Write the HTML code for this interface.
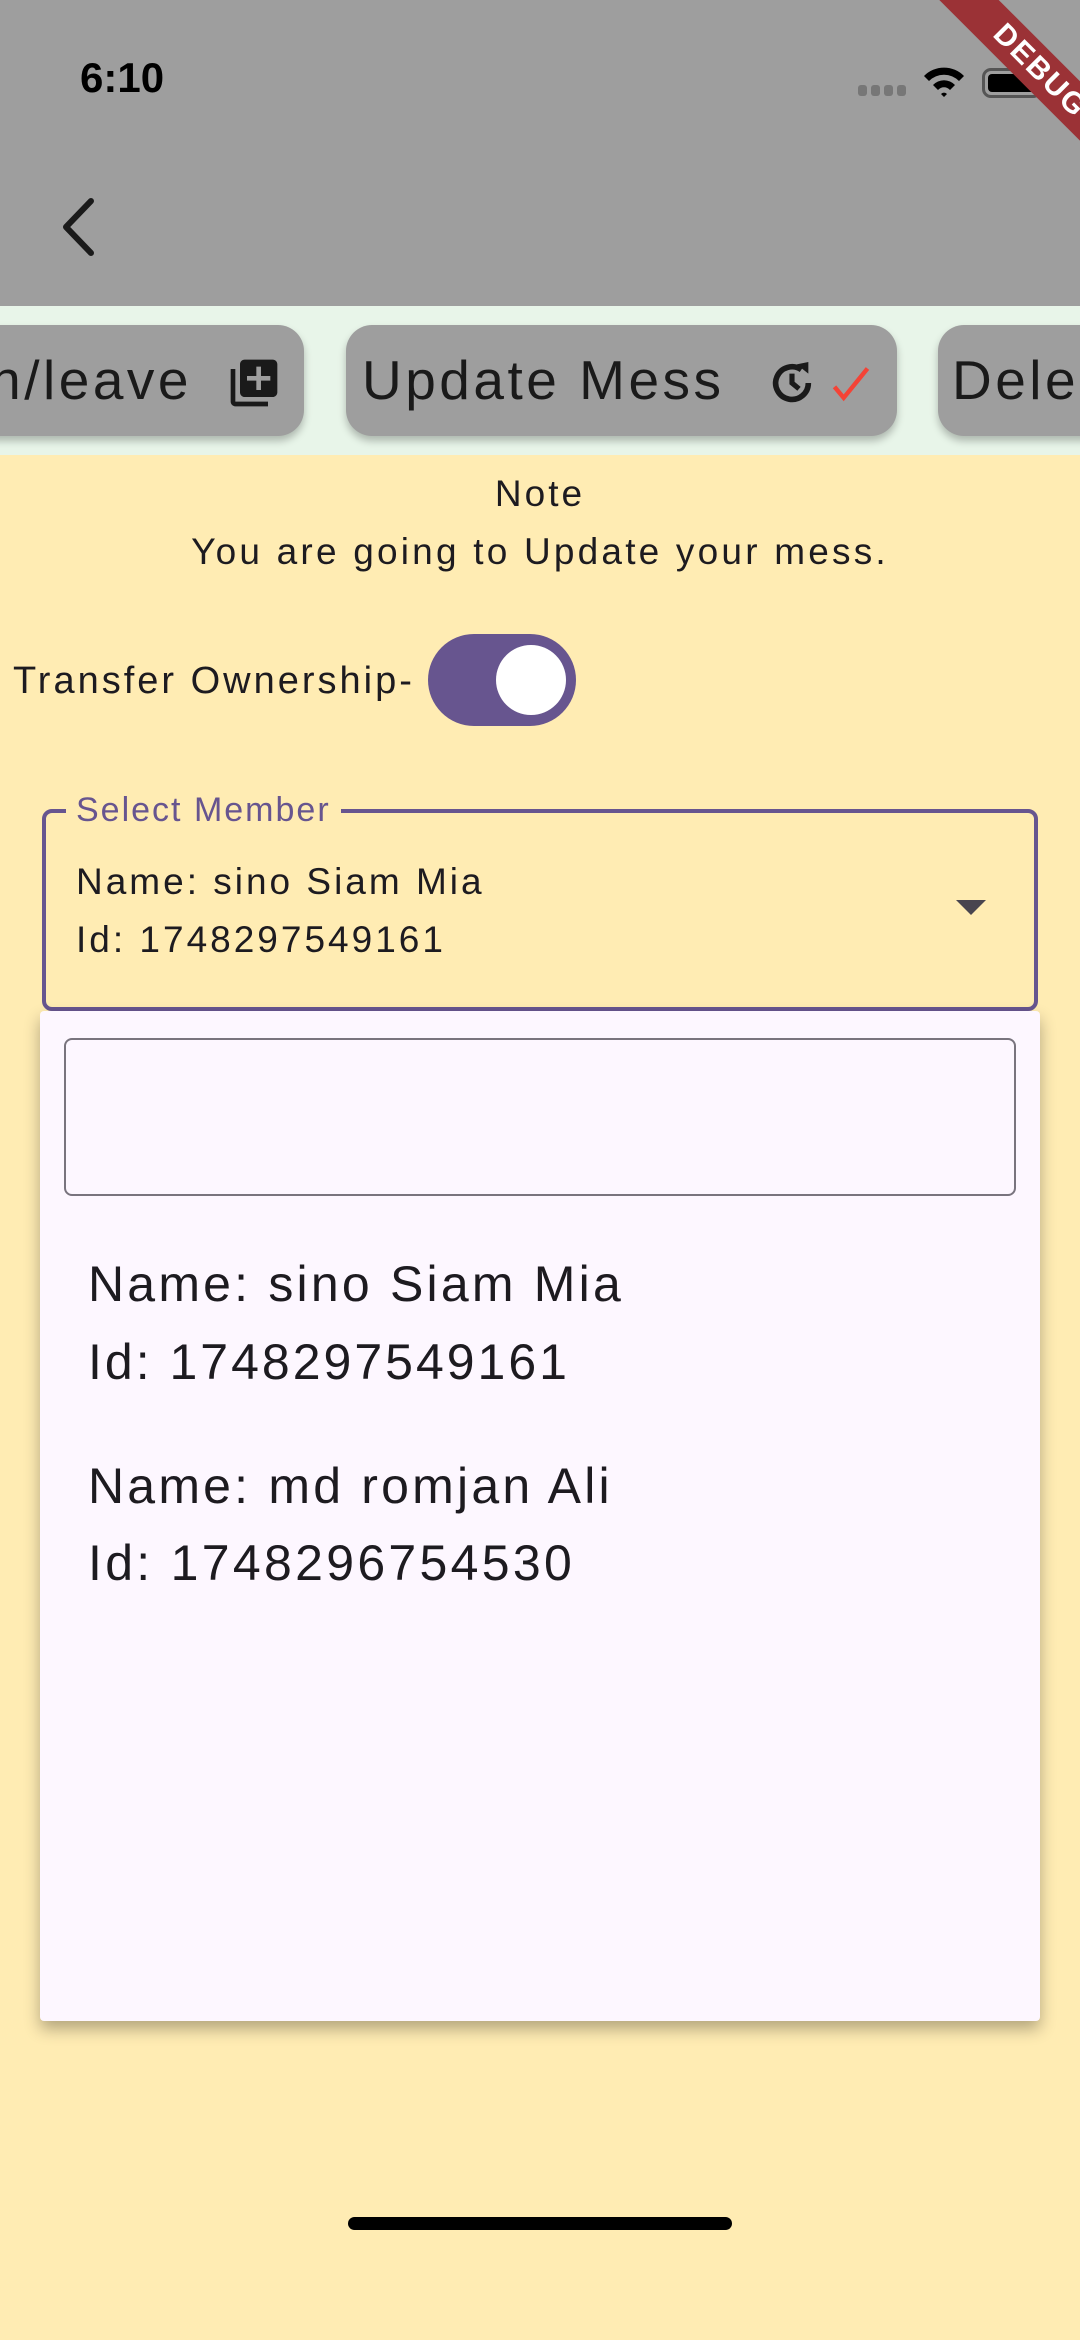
<!DOCTYPE html>
<html><head><meta charset="utf-8"><style>
*{margin:0;padding:0;box-sizing:border-box}
body{width:1080px;height:2340px;position:relative;overflow:hidden;background:#ffecb3;font-family:"Liberation Sans",sans-serif;color:#1d1b20}
.abs{position:absolute}
.btn{position:absolute;top:325px;height:111px;background:#9e9e9e;border-radius:26px;box-shadow:0 5px 8px rgba(0,0,0,.25)}
.bt{position:absolute;top:0;line-height:111px;font-size:55px;letter-spacing:3.5px;color:#1a1a1a;white-space:nowrap}
.t{position:absolute;white-space:nowrap}
</style></head><body>
<div class="abs" style="left:0;top:0;width:1080px;height:306px;background:#9e9e9e"></div>
<div class="t" style="left:80px;top:54px;font-size:42px;font-weight:bold;color:#000">6:10</div>
<div class="abs" style="left:858px;top:85px;display:flex;gap:4px"><span style="width:9px;height:11px;background:#777;border-radius:3px"></span><span style="width:9px;height:11px;background:#777;border-radius:3px"></span><span style="width:9px;height:11px;background:#777;border-radius:3px"></span><span style="width:9px;height:11px;background:#777;border-radius:3px"></span></div>
<svg class="abs" style="left:922px;top:64px" width="44" height="34" viewBox="0 0 44 34"><path d="M2 12 A28 28 0 0 1 42 12 L37 17 A21 21 0 0 0 7 17Z M11 21 A15 15 0 0 1 33 21 L28 26 A8 8 0 0 0 16 26Z M19 30 L22 33 L25 30 A4 4 0 0 0 19 30Z" fill="#000"/></svg>
<div class="abs" style="left:982px;top:68px;width:60px;height:30px;border:3px solid #555;border-radius:9px;padding:3px"><div style="width:100%;height:100%;background:#000;border-radius:4px"></div></div>
<div class="abs" style="left:880px;top:50px;width:320px;height:42px;background:#9b3236;transform:rotate(45deg);color:#fff;font-weight:bold;font-size:30px;text-align:center;line-height:42px;letter-spacing:2px">DEBUG</div>
<svg class="abs" style="left:58px;top:196px" width="40" height="62" viewBox="0 0 40 62"><path d="M33 5 L8 31 L33 57" stroke="#1a1a1a" stroke-width="6" fill="none" stroke-linecap="round" stroke-linejoin="round"/></svg>
<div class="abs" style="left:0;top:306px;width:1080px;height:149px;background:#e8f5e9"></div>
<div class="btn" style="left:-40px;width:344px"><div class="bt" style="right:112px">n/leave</div>
<svg class="abs" style="right:22px;top:30px" width="56" height="56" viewBox="0 0 24 24"><path d="M4 6H2v14c0 1.1.9 2 2 2h14v-2H4V6zm16-4H8c-1.1 0-2 .9-2 2v12c0 1.1.9 2 2 2h12c1.1 0 2-.9 2-2V4c0-1.1-.9-2-2-2zm-1 9h-4v4h-2v-4H9V9h4V5h2v4h4v2z" fill="#1a1a1a"/></svg></div>
<div class="btn" style="left:346px;width:551px"><div class="bt" style="left:16px">Update Mess</div>
<svg class="abs" style="left:418px;top:30px" width="56" height="56" viewBox="0 0 24 24"><path d="M19 12a7 7 0 1 1-3-5.7" stroke="#1a1a1a" stroke-width="2.4" fill="none"/><path d="M14 4 L19 3 L19 8Z" fill="#1a1a1a"/><path d="M12 8v4l3 2.5" stroke="#1a1a1a" stroke-width="2.2" fill="none"/></svg>
<svg class="abs" style="left:483px;top:38px" width="44" height="44" viewBox="0 0 24 24"><path d="M3 13l5 6L21 3" stroke="#f44336" stroke-width="2.4" fill="none"/></svg></div>
<div class="btn" style="left:938px;width:200px"><div class="bt" style="left:14px">Dele</div></div>
<div class="t" style="left:0;width:1080px;text-align:center;top:472px;font-size:37px;line-height:44px;letter-spacing:3px">Note</div>
<div class="t" style="left:0;width:1080px;text-align:center;top:530px;font-size:37px;line-height:44px;letter-spacing:3.2px">You are going to Update your mess.</div>
<div class="t" style="left:13px;top:658px;font-size:38px;line-height:46px;letter-spacing:3px">Transfer Ownership-</div>
<div class="abs" style="left:428px;top:634px;width:148px;height:92px;background:#67558f;border-radius:46px"></div>
<div class="abs" style="left:496px;top:645px;width:70px;height:70px;background:#fff;border-radius:50%"></div>
<div class="abs" style="left:42px;top:809px;width:996px;height:202px;border:4px solid #67558f;border-radius:10px"></div>
<div class="t" style="left:66px;top:790px;padding:0 10px;background:#ffecb3;font-size:34px;line-height:40px;color:#67558f;letter-spacing:2px">Select Member</div>
<div class="t" style="left:76px;top:860px;font-size:37px;line-height:44px;letter-spacing:3px">Name: sino Siam Mia</div>
<div class="t" style="left:76px;top:918px;font-size:37px;line-height:44px;letter-spacing:3px">Id: 1748297549161</div>
<svg class="abs" style="left:956px;top:900px" width="30" height="16"><path d="M0 0H30L15 15Z" fill="#49454f"/></svg>
<div class="abs" style="left:40px;top:1011px;width:1000px;height:1010px;background:#fdf7ff;border-radius:4px;box-shadow:0 8px 16px rgba(0,0,0,.3)"></div>
<div class="abs" style="left:64px;top:1038px;width:952px;height:158px;border:2px solid #79747e;border-radius:8px"></div>
<div class="t" style="left:88px;top:1254px;font-size:50px;line-height:60px;letter-spacing:3.2px">Name: sino Siam Mia</div>
<div class="t" style="left:88px;top:1332px;font-size:50px;line-height:60px;letter-spacing:3px">Id: 1748297549161</div>
<div class="t" style="left:88px;top:1456px;font-size:50px;line-height:60px;letter-spacing:3.2px">Name: md romjan Ali</div>
<div class="t" style="left:88px;top:1533px;font-size:50px;line-height:60px;letter-spacing:3.3px">Id: 1748296754530</div>
<div class="abs" style="left:348px;top:2217px;width:384px;height:13px;background:#000;border-radius:7px"></div>
</body></html>
